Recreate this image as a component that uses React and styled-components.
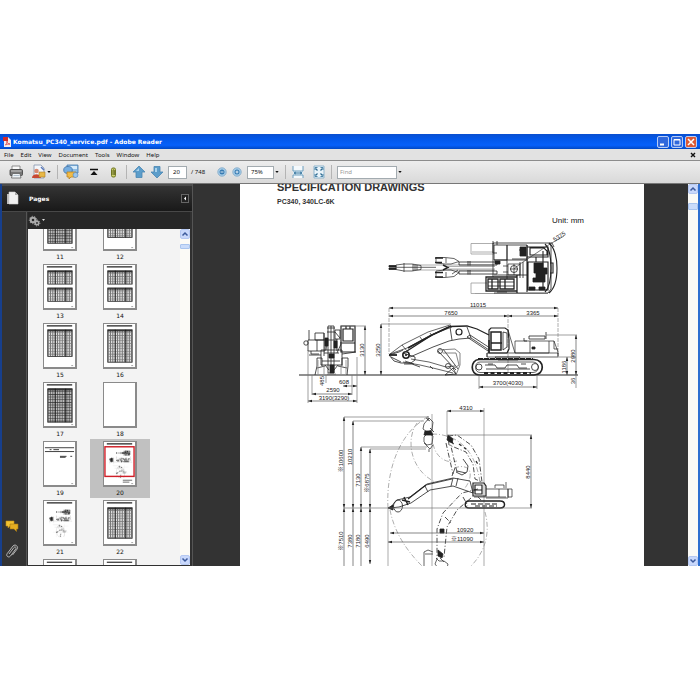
import React, { useState } from 'react';
import styled, { createGlobalStyle } from 'styled-components';

const GlobalStyle = createGlobalStyle`
  * {
    box-sizing: border-box;
  }

  body {
    margin: 0;
    background: #fff;
    font-family: 'Noto Sans', 'Liberation Sans', sans-serif;
    font-size: 6px;
    color: #111;
  }

  button, input, select {
    font: inherit;
    color: inherit;
    margin: 0;
  }
`;

const Window = styled.div`
  display: flex;
  flex-direction: column;
  height: calc(100vh - 268px);
  margin: 134px 0;
  overflow: hidden;
`;

const TitleBar = styled.header`
  display: flex;
  align-items: center;
  height: 15px;
  flex: none;
  padding: 0 3px;
  gap: 2px;
  background: linear-gradient(#0a4fd0, #0257e8 30%, #0660fa 75%, #0148c4);
`;

const Title = styled.h1`
  flex: 1;
  margin: 0;
  font: bold 6px/14px 'DejaVu Sans', sans-serif;
  color: #fff;
`;

const CaptionButton = styled.button`
  width: 12px;
  height: 12px;
  padding: 0;
  display: flex;
  border: 1px solid #b9cdf5;
  border-radius: 2px;
  background: ${(props) => (props.$close ? '#dc5a35' : '#3068dc')};
`;

const MenuBar = styled.nav`
  display: flex;
  align-items: center;
  gap: 7px;
  height: 12px;
  flex: none;
  padding: 0 4px;
  background: #e2e2e2;
  border-bottom: 1px solid #8c8c8c;
`;

const MenuItem = styled.button`
  padding: 0;
  border: 0;
  background: none;
  line-height: 10px;

  &:last-child {
    display: flex;
    margin-left: auto;
  }
`;

const Toolbar = styled.div`
  display: flex;
  align-items: center;
  height: 23px;
  flex: none;
  padding-left: 8px;
  background: linear-gradient(#ededed, #d9d9d9);
  border-bottom: 1px solid #777;
`;

const ToolGroup = styled.div`
  display: flex;
  align-items: center;
  gap: ${(props) => props.$gap}px;
`;

const ToolButton = styled.button`
  display: flex;
  align-items: center;
  padding: 0;
  border: 0;
  background: none;
`;

const Divider = styled.span`
  width: 1px;
  height: 14px;
  margin: 0 5px;
  background: #b4b4b4;
`;

const field = `
  height: 13px;
  border: 1px solid #a3abb0;
  border-radius: 0;
  background: #fff;
  outline: none;
`;

const PageInput = styled.input`
  ${field}
  width: 19px;
  padding: 0 4px;
`;

const PageTotal = styled.span`
  width: 26px;
`;

const ZoomSelect = styled.select`
  ${field}
  appearance: none;
  width: 27px;
  padding: 0 3px;
`;

const FindInput = styled.input`
  ${field}
  width: 60px;
  padding: 0 2px;

  &::placeholder {
    color: #999;
    opacity: 1;
  }
`;

const Workspace = styled.main`
  display: flex;
  flex: 1;
  min-height: 0;
  border: solid #173f8c;
  border-width: 0 0 0 2px;
  background: #333;
`;

const Sidebar = styled.aside`
  display: flex;
  flex-direction: column;
  width: 191px;
  flex: none;
  border-right: 1px solid #555;
  background: #303030;
`;

const PanelHeader = styled.div`
  display: flex;
  align-items: center;
  gap: 10px;
  height: 28px;
  flex: none;
  padding: 0 3px 0 4px;
  border-top: 2px solid #4b4b4b;
  border-bottom: 1px solid #484848;
  background: linear-gradient(#343434, #191919);
`;

const PanelTitle = styled.h2`
  flex: 1;
  margin: 0;
  font: bold 6px/10px 'DejaVu Sans', sans-serif;
  color: #fff;
`;

const CollapseButton = styled.button`
  display: flex;
  width: 8px;
  height: 9px;
  padding: 0;
  border: 1px solid #666;
  background: #222;
`;

const SidebarBody = styled.div`
  display: flex;
  flex: 1;
  min-height: 0;
`;

const Rail = styled.div`
  display: flex;
  flex-direction: column;
  justify-content: flex-end;
  align-items: center;
  gap: 12px;
  width: 24px;
  padding: 0 4px 6px 0;
  background: #333;
`;

const PagesPanel = styled.section`
  display: flex;
  flex-direction: column;
  flex: 1;
  border-left: 1px solid #555;
  padding: 0 2px 1px 1px;
`;

const PanelOptions = styled.div`
  display: flex;
  align-items: center;
  height: 17px;
  flex: none;
  background: #272727;
`;

const ThumbArea = styled.div`
  display: flex;
  flex: 1;
  min-height: 0;
  overflow: hidden;
  background: #f3f3f3;
`;

const ThumbGrid = styled.div`
  display: grid;
  grid-template-columns: 60px 60px;
  grid-auto-rows: 59px;
  flex: 1;
  margin-top: -26px;
  padding-left: 2px;
`;

const ThumbCell = styled.button`
  display: flex;
  flex-direction: column;
  align-items: center;
  padding: 2px 0 0;
  border: 0;
  background: ${(props) => (props.$active ? '#c1c1c1' : 'none')};
  font: 6px/11px 'DejaVu Sans', sans-serif;
`;

const ThumbSheet = styled.svg`
  display: block;
  width: 34px;
  height: 46px;
  border: solid #8a8a8a;
  border-width: 1px 2px 2px 1px;
  background: #fff;
`;

const ScrollTrack = styled.div`
  display: flex;
  flex-direction: column;
  width: 10px;
  flex: none;
  background: #fbfaf6;
`;

const ScrollButton = styled.button`
  display: flex;
  height: 10px;
  padding: 0;
  border: 1px solid #b5c8f2;
  border-radius: 2px;
  background: #c9d8fb;

  &:last-child {
    margin-top: auto;
  }
`;

const ScrollHandle = styled.div`
  height: ${(props) => props.$size}px;
  margin-top: ${(props) => props.$offset}px;
  border: 1px solid #a9c4ee;
  border-radius: 1px;
  background: #c9dbfa;
`;

const DocumentView = styled.section`
  display: flex;
  flex: 1;
  min-width: 0;
  padding-left: 47px;
`;

const Sheet = styled.article`
  flex: 1;
  min-width: 0;
  margin-right: 44px;
  overflow: hidden;
  background: #fff;
  font-family: 'Liberation Sans', sans-serif;
  color: #333;
`;

const SheetHeading = styled.h2`
  margin: -4px 0 0 37px;
  font-size: 11px;
  line-height: 14px;
  white-space: nowrap;
`;

const ModelName = styled.p`
  margin: 3px 0 0 37px;
  font-size: 7px;
  font-weight: bold;
  line-height: 10px;
`;

const UnitNote = styled.p`
  margin: 9px 60px 0 0;
  font-size: 8px;
  line-height: 10px;
  text-align: right;
  color: #111;
`;

const Drawing = styled.svg`
  display: block;
  margin: 2px 0 0 50px;
`;

const WindowEdge = styled.div`
  width: 2px;
  background: #2e6fd0;
`;

function Caret() {
  return (
    <svg width="6" height="6" viewBox="0 0 6 6">
      <path d="M1.3 2h3.4L3 4z" fill="#111" />
    </svg>
  );
}

function Chevron({ down }) {
  return (
    <svg width="8" height="8" viewBox="0 0 8 8">
      <path
        d={down ? 'M1.500 2.500 4 5l2.500-2.500' : 'M1.500 5.500 4 3l2.500 2.500'}
        fill="none"
        stroke="#3c5a9c"
        strokeWidth="1.500"
      />
    </svg>
  );
}

function PdfIcon() {
  return (
    <svg width="8" height="10" viewBox="0 0 8 10">
      <path d="M1 0h4l3 3v7H1z" fill="#f4eeee" />
      <path d="M0 0h5v4H0z" fill="#d12a2a" />
      <path d="M2.500 8C4 6 4 5 4 4c0 2 1 3 3 3-2 0-3 .3-4.500 1" fill="none" stroke="#d12a2a" strokeWidth=".7" />
    </svg>
  );
}

function PrintIcon() {
  return (
    <svg width="16" height="16" viewBox="0 0 16 16">
      <path d="M4 2h8v4H4z" fill="#fafafa" stroke="#777" strokeWidth=".8" />
      <rect x="2" y="5.500" width="12.500" height="6" rx="1" fill="#777" stroke="#3c3c3c" strokeWidth=".8" />
      <path d="M3 7h10.500" stroke="#ccc" />
      <path d="M4.500 9.500h7.500l1 4.500H3.500z" fill="#eef3f6" stroke="#555" strokeWidth=".7" />
      <path d="M5.500 11.500h6" stroke="#9ab" strokeWidth=".7" />
    </svg>
  );
}

function ShareIcon() {
  return (
    <svg width="15" height="16" viewBox="0 0 15 16">
      <path d="M3 1h7l3 3v10H3z" fill="#f4f6fa" stroke="#8795ac" strokeWidth=".8" />
      <circle cx="5.500" cy="7" r="2.300" fill="#d8876d" />
      <path d="M1 14c0-5 9-5 9 0z" fill="#c94832" />
      <path d="M8 8h6v5H8z" fill="#e9b845" stroke="#a77d2a" strokeWidth=".6" />
      <path d="m10 3 3 3" stroke="#5978ba" strokeWidth="1.500" />
    </svg>
  );
}

function MeetingIcon() {
  return (
    <svg width="16" height="16" viewBox="0 0 16 16">
      <path d="M4 1h11v8H4z" fill="#8dbbe3" stroke="#4478ad" strokeWidth=".8" />
      <path d="M5 2h9v3H5z" fill="#d5eafa" />
      <ellipse cx="5" cy="6" rx="4.300" ry="3.500" fill="#77aee0" stroke="#3f72a8" strokeWidth=".8" />
      <path d="M4 8h9v5H8l-2 2v-2H4z" fill="#f1bb47" stroke="#b98323" strokeWidth=".8" />
      <circle cx="12.500" cy="11" r="2.500" fill="#9cc5eb" stroke="#4f83b8" strokeWidth=".6" />
    </svg>
  );
}

function TopIcon() {
  return (
    <svg width="12" height="12" viewBox="0 0 12 12">
      <path d="M2 3.500h8" stroke="#111" strokeWidth="1.500" />
      <path d="M6 5 9.500 9h-7z" fill="#111" />
    </svg>
  );
}

function ClipIcon() {
  return (
    <svg width="12" height="13" viewBox="0 0 12 13">
      <rect x="2.500" y="2" width="4" height="9" rx="1.500" fill="#ced36c" stroke="#6f7521" />
      <path d="M4 9V4.500c0-1 1.300-1 1.300 0V9" fill="none" stroke="#42460f" strokeWidth=".8" />
    </svg>
  );
}

function ArrowIcon({ down }) {
  return (
    <svg width="14" height="14" viewBox="0 0 14 14">
      <path
        d={down ? 'M7 13 1 7h3V1.500h6V7h3z' : 'M7 1 13 7h-3v5.500H4V7H1z'}
        fill="#5c9dca"
        stroke="#4a86b2"
        strokeWidth=".8"
      />
      <path d={down ? 'M5 3v4h2V3z' : 'M7 3 4 6h3z'} fill="#a9d2ec" />
    </svg>
  );
}

function ZoomIcon({ plus }) {
  return (
    <svg width="10" height="10" viewBox="0 0 10 10">
      <circle cx="5" cy="5" r="4.200" fill="#a9cfea" stroke="#7ba5c5" strokeWidth=".8" />
      <circle cx="5" cy="5" r="2.500" fill="#377bb2" />
      <path d={plus ? 'M3.500 5h3M5 3.500v3' : 'M3.500 5h3'} stroke="#fff" strokeWidth=".8" />
    </svg>
  );
}

function FitWidthIcon() {
  return (
    <svg width="14" height="14" viewBox="0 0 14 14">
      <path d="M2 1h10v12H2z" fill="#dcebf4" />
      <path d="M2 1v5h10V1M2 13v-3h10v3" fill="#f4f9fc" stroke="#6d9ebd" />
      <path d="M3 8h8M5 7 3 8l2 1M9 7l2 1-2 1" fill="none" stroke="#3f7ca3" />
    </svg>
  );
}

function FitPageIcon() {
  return (
    <svg width="14" height="14" viewBox="0 0 14 14">
      <path d="M2 1h10v12H2z" fill="#e9f3f9" stroke="#8fb5cd" />
      <path d="m3.500 3.500 2 2M10.500 3.500l-2 2M3.500 10.500l2-2M10.500 10.500l-2-2" stroke="#2f6b91" strokeWidth="1.200" />
      <path d="M3 5V2.500h2.500M8.500 2.500H11V5M3 9v2.500h2.500M8.500 11.500H11V9" fill="none" stroke="#4f86a9" />
    </svg>
  );
}

function PagesIcon() {
  return (
    <svg width="13" height="15" viewBox="0 0 13 15">
      <path d="M1 3h7v10H1z" fill="#bbb" />
      <path d="M3 1h6l3 3v9H3z" fill="#f1f1f1" stroke="#ccc" strokeWidth=".6" />
      <path d="M9 1v3h3z" fill="#aaa" />
    </svg>
  );
}

function GearsIcon() {
  return (
    <svg width="18" height="12" viewBox="0 0 18 12">
      <g fill="none" stroke="#aaa">
        <circle cx="5" cy="5" r="2.300" strokeWidth="2" />
        <circle cx="5" cy="5" r="3.700" strokeDasharray="1.300 1.300" />
        <circle cx="9" cy="8" r="1.700" strokeWidth="1.600" />
        <circle cx="9" cy="8" r="2.900" strokeDasharray="1.100 1.100" />
      </g>
      <path d="M14 4h3l-1.500 2z" fill="#ddd" />
    </svg>
  );
}

function CommentsIcon() {
  return (
    <svg width="14" height="12" viewBox="0 0 14 12">
      <path d="M1 1h8v5H5L3 8V6H1z" fill="#f2c230" stroke="#c38d14" strokeWidth=".6" />
      <path d="M5 4h8v5h-1.500v2.500L9 9H5z" fill="#e4ad22" stroke="#a97812" strokeWidth=".6" />
    </svg>
  );
}

function PaperclipIcon() {
  return (
    <svg width="14" height="16" viewBox="0 0 14 16">
      <path
        d="m4 10 5-6.500c1-1.300 2.800 0 1.800 1.400L5.500 12c-1.800 2.300-5 0-3.300-2.400L8 2c2-2.500 6 .5 4 3.200L7.500 11"
        fill="none"
        stroke="#c4c4c4"
        strokeWidth=".9"
      />
    </svg>
  );
}

const INK = '#222';

// Dimension line with a filled head at both ends
function Dim({ x1, y1, x2, y2 }) {
  const vertical = x1 === x2;
  const heads = vertical
    ? `M${x1} ${y1}l-1.200 4h2.400zM${x2} ${y2}l-1.200-4h2.400z`
    : `M${x1} ${y1}l4-1.200v2.400zM${x2} ${y2}l-4-1.200v2.400z`;
  return (
    <g>
      <path d={`M${x1} ${y1}L${x2} ${y2}`} stroke="#555" strokeWidth=".7" />
      <path d={heads} fill={INK} stroke="none" />
    </g>
  );
}

function TopView() {
  return (
    <g>
      <g stroke="#999">
        <path d="M494 243.500H471v10.500h23M471 283v10.500h24M471 283h16M494 252h-22M475 293.500h73" />
        <path d="M413 265h82M413 270h82M448 266.500h47M448 269h47" />
      </g>
      <path d="M389 265.500h7v1.500h-7zM389 268h7v1.500h-7z" fill={INK} />
      <path d="M396 265l8-1h8l9 1.500v4l-9 1.500h-8l-8-1.500zM396 267.300h40M404 263v9M413 264v7M415 265v5M417 265v5" strokeWidth=".7" />
      <path d="M436 257.500h9l9 1 5 3-8 2.500h-6l-9-1zM436 277.500h9l9-1 5-4-8-2.500h-6l-9 1zM446 258v5M446 272v5M452 274l6-4" strokeWidth=".7" />
      <path d="M435 258h8M435 262.500h7M435 272.500h8M435 277h8M443 265l5 2.500-5 2.500" strokeWidth="1.400" />
      <path d="M459 262h38v3h-38zM459 271h38v3h-38zM468 261v4.500M470 261v4.500M468 270v4.500M470 270v4.500" />
      <path d="M493 243h56l2 3v43l-3 4h-54M494 245h13v15h-13zM507 245h20v14h-15M507 245v34M493 243v34" />
      <path d="M497 241v4M497 253h-4v-12M494 260h34M494 275h34M519 250h7M520 262v16M523 262v16" />
      <path d="M520 247h6v9h-6z" fill={INK} />
      <path d="M527 245v47M527 257h21v-10h-21M528 262h20v28h-20zM530 248h14l3 3v4h-17zM536 257v5M543 251v38" strokeWidth="1.100" />
      <path d="M534 263h9v5h4v6h-2v8h-12v-4h3v-5h-2z" fill={INK} />
      <path d="M549 243c4 3 8 12 8 25s-3 21-8 25M545 244c4 4 6 12 6 24s-2 20-6 24M550 263h3v10h-3" strokeWidth="1.100" />
      <path d="M549 243h3l2 4" />
      <path d="M486 277h31v14h-31zM488 279h10v10h-10zM500 279h14v10h-14zM492 279v10M505 279v10M517 275v18" strokeWidth="1.300" />
      <path d="M488 282h26M488 286h26" strokeWidth=".8" />
      <path d="M508 264h12v11h-12zM510 269h8M514 264v11M503 266h5M503 272h5" strokeWidth=".7" />
      <circle cx="514" cy="269" r="3.500" />
      <path d="M495 261h5v3h-5zM529 287h6v3h-6zM539 287h6v3h-6zM497 292l10 0" fill={INK} />
      <path d="M564 236l-14 8-30 20-6 5" strokeWidth=".6" />
    </g>
  );
}

function Crawler() {
  return (
    <g>
      <path d="M479 359.500h55c11 0 11 15.500 0 15.500h-55c-9 0-9-15.500 0-15.500z" strokeWidth="1.700" />
      <path d="M480 362h53c7 0 7 10.500 0 10.500h-53c-6 0-6-10.500 0-10.500z" strokeWidth=".7" />
      <circle cx="479" cy="367" r="3" />
      <circle cx="535" cy="367" r="3.500" />
      <path d="M484 373h47" strokeWidth="2" strokeDasharray="4 2.500" />
      <path d="M485 365h10l2 3h8l2-3h10l2 3h8M488 364h5M521 364h5M486 369h44" />
      <path d="M478 359h55" strokeWidth="2" strokeDasharray="5 1" />
    </g>
  );
}

function SideView() {
  return (
    <g>
      <path d="M389 308v46M508 314v61M558 308v46" stroke="#999" strokeDasharray="4 1" />
      <Crawler />
      <path d="M489 353V330l2-2h14l3 2 1 10v9l-2 4z" strokeWidth="1.200" />
      <path d="M491 332h10v18h-10zM491 343h11M489 340v13" strokeWidth="1.500" />
      <path d="M503 332l4 1v14l-4 3z" />
      <path d="M487 353h71v4h-71zM495 357h25l-2 3h-20zM515 341h34v12h-34zM530 341v12M549 341h5l4 11v4M554 341v8h4M515 353l-4-13-3-10M487 357v-4" strokeWidth=".7" />
      <path d="M529 339v-3h16v3zM546 339v-7M527 341h-3v-3" />
      <path d="M532 347h3v2h-3z" fill={INK} />
      <path d="M489 335l-12-6-10-3-17 .5-18 8.500-25 16" strokeWidth="1.300" />
      <path d="M489 350l-18-12-12 1-10 2-16 6-23 10M450 327l2 13M467 327l4 11" />
      <circle cx="459" cy="332" r="3" strokeWidth="1.200" />
      <path d="M467 337l3-2 20 13-2 3z" />
      <path d="M390 354l12-9 26-13 22-7 2 2-21 8-24 13zM420 337l3 4M430 333l2 3M402 345l5 6" strokeWidth=".7" />
      <path d="M408 348l24-13 17-8" strokeWidth="1.500" />
      <circle cx="406" cy="355" r="3.200" strokeWidth="1.600" />
      <circle cx="406" cy="355" r=".8" fill={INK} />
      <path d="M389 355l5 6 7 2h10l4-3 0-3-12-4M389 355l10-3 4-2M391 357l10 5" />
      <path d="M389 355l8 0" strokeWidth="1.800" />
      <path d="M411 359l18 3 17 5 9-1M403 362l17 3 13 3 20 5M405 361l9 3" strokeWidth=".7" />
      <path d="M404 364h8l8 3M430 366l3 3M438 351l18 19M443 349l15 20" />
      <circle cx="440" cy="351" r="2.500" />
      <circle cx="448" cy="366" r="2.500" />
      <path d="M438 350l17-1 5 4v12l-4 10M443 353h13M456 353l3 12-6 4M448 366l8 8" stroke="#666" />
      <path d="M445 375l8-7 3 6z" />
    </g>
  );
}

function FrontView() {
  return (
    <g>
      <path d="M328 326h6v47h-6zM331 326v47M327 328h8M327 332h8M325 340h12" />
      <path d="M341 326h14v26h-14zM343 329h10v12h-10zM340 343h15M346 326v3M350 326v3" strokeWidth="1.200" />
      <path d="M308 340h17v11h-17zM315 333h9v7h-9zM309 330v10M317 340v11M311 351v3h8M335 330h5v9h-5zM335 332l5 6M324 333v23M337 339v12" />
      <circle cx="306" cy="343" r="2.200" />
      <path d="M321 350h21v15h-21zM324 353h15M322 361h18M326 350l1-10M337 353l4-9M342 354l14-2M309 355h12" />
      <path d="M329 354h5v4h-5zM330 365h4v8h-4zM325 338h3v8h-3zM334 341h3v7h-3z" fill={INK} />
      <path d="M317 366v-8h5v8M317 366l-2 9M342 366v-8h6v8M348 366l-1 9M325 365l4 5M334 370l4-5M317 368l8-2M347 368l-9-2" />
      <path d="M318 374v-14M346 374v-14M324 374v-9M341 374v-9M327 374h9" stroke="#888" />
    </g>
  );
}

function WorkingRange() {
  return (
    <g>
      <path d="M388 508v58M432 414v152M484 408v158M447 411v26" stroke="#888" strokeWidth=".7" />
      <g stroke="#999" strokeDasharray="5 2 1 2">
        <path d="M388 508c-2-34 9-68 31-85l8-6M390 510c4 20 14 38 32 56M485 512c5 18 2 38-14 54" />
        <path d="M417 423c-11 15-8 46 18 59M433 444c3 14 14 20 24 17M432 434c25 0 43 15 48 48M454 468c18-6 20 8 11 20" />
      </g>
      <path d="M424 424l5-6 4 4-1 8-5 2-4-3zM424 437l4-4 5 3-1 8-5 1-3-3zM424 443l6 6 3-4M426 418l4 3M429 449v3M428 416v5" strokeWidth=".7" />
      <path d="M425 431h6l2 4h-9zM430 428l4 4" fill={INK} />
      <g strokeDasharray="5 2 1 2" strokeWidth=".8">
        <path d="M448 436l9-1 14 10 8 14 3 23-7-3-2-15-7-12-17-7zM449 438l8 34M446 443l7 31" />
        <path d="M478 489l-16 4-19 20-6 16v30M471 498l-14 12-10 17-3 30M445 517l7 7M463 497l5 9" />
      </g>
      <path d="M448 437l7 9M459 444l10 7M476 461l3 5" strokeWidth="1.200" strokeDasharray="3 3" />
      <path d="M463 459l5 7-1 6-5 3-6-3M455 468l-3 8M457 471l9 2" strokeWidth=".8" />
      <path d="M448 435l5 4-1 4-5-3zM440 529h4v4h-4zM438 550l5 4-1 4-4-2z" fill={INK} />
      <path d="M390 508l7-8 13-3 17-13 26-6 17 3 3 12-20-7-23 4-19 13-12 4-9 1z" strokeWidth=".8" />
      <path d="M408 499l18-14" strokeWidth="1.100" />
      <path d="M426 485l26-6M425 486l3 6M453 478l-2 8M458 478l-2 8" />
      <path d="M402 500l8 2M404 497l4 8" strokeWidth="1.400" />
      <ellipse cx="398" cy="506" rx="4.500" ry="6" />
      <path d="M388 508l5-3v5z" fill={INK} />
      <path d="M473 483h11l2 3v10h-13zM475 485h7v9h-7zM474 490h8" strokeWidth="1.200" />
      <path d="M486 489h22v9h-22M499 489v8M508 489h4v8h-4zM495 488v-3h9v3M506 488v-6M474 497h32M478 497l3 3" strokeWidth=".7" />
      <path d="M469 501h31c6 0 6 7 0 7h-31c-5 0-5-7 0-7z" strokeWidth="1.500" />
      <path d="M471 504h28M475 506h22" strokeDasharray="5 2" strokeWidth="1.200" />
      <path d="M424 566v-14l4-2 5 2M425 554h8M436 558l3 3h5l4 3-1 4M437 559l-2 5 3 4M440 558l4 4" strokeWidth=".7" />
    </g>
  );
}

function MachineLines({ weight = '.8' }) {
  return (
    <g fill="none" stroke={INK} strokeWidth={weight}>
      <TopView />
      <SideView />
      <FrontView />
      <WorkingRange />
      <path d="M299 375h279" strokeWidth="1.200" />
      <path
        d="M381 324h70M546 335h31M558 357h18M341 326h25M344 417h84M353 421h71M361 447h66M370 449h56M344 508h188M447 435h85M479 375v14M537 375v14M357 357v46M308 350v53M312 375v20M352 375v20M326 375v8M576 375v13"
        stroke="#777"
        strokeWidth=".7"
      />
    </g>
  );
}

const dims = [
  [389, 308, 558, 308], [389, 316, 508, 316], [508, 316, 558, 316], [381, 324, 381, 375],
  [576, 335, 576, 375], [567, 357, 567, 375], [365, 326, 365, 375], [479, 387, 537, 387],
  [343, 386, 357, 386], [312, 394, 352, 394], [308, 401, 357, 401], [447, 411, 484, 411],
  [531, 435, 531, 508], [344, 417, 344, 508], [353, 421, 353, 508], [361, 447, 361, 508],
  [370, 449, 370, 508], [344, 508, 344, 580], [353, 508, 353, 580], [361, 508, 361, 580],
  [370, 508, 370, 564], [390, 533, 484, 533], [388, 542, 484, 542],
];

const labels = [
  { text: '11015', x: 478, y: 308 },
  { text: '7650', x: 451, y: 316 },
  { text: '3365', x: 533, y: 316 },
  { text: '3250', x: 381, y: 350, turn: -90 },
  { text: '2980', x: 576, y: 356, turn: -90 },
  { text: '1186', x: 567, y: 367, turn: -90 },
  { text: '36', x: 576, y: 381, turn: -90 },
  { text: '3700(4030)', x: 508, y: 386 },
  { text: '3130', x: 365, y: 350, turn: -90 },
  { text: '485', x: 325, y: 381, turn: -90 },
  { text: '608', x: 344, y: 385 },
  { text: '2590', x: 333, y: 393 },
  { text: '3190(3290)', x: 334, y: 401 },
  { text: '5375', x: 561, y: 239, turn: -33 },
  { text: '4310', x: 466, y: 411 },
  { text: '8440', x: 531, y: 472, turn: -90 },
  { text: '※10600', x: 344, y: 461, turn: -90 },
  { text: '10210', x: 353, y: 457, turn: -90 },
  { text: '7130', x: 361, y: 480, turn: -90 },
  { text: '※6875', x: 370, y: 483, turn: -90 },
  { text: '※7510', x: 344, y: 541, turn: -90 },
  { text: '7380', x: 353, y: 541, turn: -90 },
  { text: '7180', x: 361, y: 541, turn: -90 },
  { text: '6490', x: 370, y: 541, turn: -90 },
  { text: '10920', x: 465, y: 533 },
  { text: '※11090', x: 462, y: 542 },
];

function SpecDrawing() {
  return (
    <Drawing width="300" height="340" viewBox="290 228 300 340" role="img" aria-label="PC340 dimensions">
      <MachineLines />
      {dims.map(([x1, y1, x2, y2]) => (
        <Dim key={`${x1}-${y1}-${x2}-${y2}`} x1={x1} y1={y1} x2={x2} y2={y2} />
      ))}
      <g fontFamily="'Liberation Sans', 'Noto Sans CJK JP', sans-serif" fontSize="6" fill="#222" textAnchor="middle">
        {labels.map(({ text, x, y, turn = 0 }) => (
          <text key={text} transform={`translate(${x} ${y}) rotate(${turn})`} y="-1">
            {text}
          </text>
        ))}
      </g>
    </Drawing>
  );
}

// Miniature table of figures, drawn as ruled columns over small text rows
function MiniTable({ y, height, dark }) {
  return (
    <g fill="none">
      <rect x="4" y={y} width="26" height={height} fill={dark ? '#bbb' : '#ddd'} stroke="#222" strokeWidth=".8" />
      <path
        d={`M4 ${y + height / 2}h26`}
        stroke="#555"
        strokeWidth={height}
        strokeDasharray=".8 1.700"
      />
      <path
        d={`M17 ${y}v${height}`}
        stroke={dark ? '#333' : '#777'}
        strokeWidth="25"
        strokeDasharray=".6 2.200"
      />
      <path d={`M4 ${y + 1}h26`} stroke="#333" strokeWidth="1.500" />
      <path d={`M12 ${y}v${height}M23 ${y}v${height}`} stroke="#111" strokeWidth=".8" />
    </g>
  );
}

const pages = [
  { number: 11, tables: [[3, 36]], dark: true },
  { number: 12, tables: [[3, 30]] },
  { number: 13, tables: [[6, 14], [24, 14]] },
  { number: 14, tables: [[6, 14], [24, 14]] },
  { number: 15, tables: [[6, 28]] },
  { number: 16, tables: [[6, 34]] },
  { number: 17, tables: [[6, 35]], dark: true },
  { number: 18, blank: true },
  { number: 19, cover: true },
  { number: 20, drawing: true },
  { number: 21, drawing: true },
  { number: 22, tables: [[7, 32]] },
];

function Thumbnail({ page, active, onSelect }) {
  return (
    <ThumbCell $active={active} onClick={() => onSelect(page.number)}>
      <ThumbSheet viewBox="0 0 33 45" preserveAspectRatio="none">
        {!page.blank && !page.cover && <path d="M3 2h4M7 2h18M25 2h5" stroke="#222" strokeWidth="1.200" />}
        {page.tables?.map(([y, height]) => (
          <MiniTable key={y} y={y} height={height} dark={page.dark} />
        ))}
        {page.cover && (
          <path d="M1 6h31M1 10h31M6 8h2M10 8h6M17 15h7M28 15h2M17 16h6" stroke="#222" strokeWidth=".9" />
        )}
        {page.drawing && (
          <g transform="translate(-21 -12) scale(.088)">
            <MachineLines weight="4" />
          </g>
        )}
        {page.number === 20 && <path d="M20 40h10M20 42h7" stroke="#444" strokeWidth=".8" />}
        {active && <rect x="1" y="5" width="31" height="31" fill="none" stroke="#cf1f28" strokeWidth="1.500" />}
        {!page.blank && <path d="M29 43.500h2" stroke="#666" strokeWidth=".6" />}
      </ThumbSheet>
      {page.number}
    </ThumbCell>
  );
}

// Top edge of a sheet that is still below the fold
function SheetEdge() {
  return (
    <ThumbCell as="div">
      <ThumbSheet viewBox="0 0 33 45">
        <path d="M3 2h27" stroke="#222" strokeWidth="1.200" />
      </ThumbSheet>
    </ThumbCell>
  );
}

function Scrollbar({ size, offset }) {
  return (
    <ScrollTrack>
      <ScrollButton aria-label="Scroll up"><Chevron /></ScrollButton>
      <ScrollHandle $size={size} $offset={offset} />
      <ScrollButton aria-label="Scroll down"><Chevron down /></ScrollButton>
    </ScrollTrack>
  );
}

const menus = ['File', 'Edit', 'View', 'Document', 'Tools', 'Window', 'Help'];

function App() {
  const [current, setCurrent] = useState(20);
  const [zoom, setZoom] = useState('75%');
  const [query, setQuery] = useState('');

  return (
    <>
      <GlobalStyle />
      <Window>
        <TitleBar>
          <PdfIcon />
          <Title>Komatsu_PC340_service.pdf - Adobe Reader</Title>
          <CaptionButton aria-label="Minimize">
            <svg width="10" height="10" viewBox="0 0 10 10"><path d="M2 7.500h4" stroke="#fff" strokeWidth="2" /></svg>
          </CaptionButton>
          <CaptionButton aria-label="Maximize">
            <svg width="10" height="10" viewBox="0 0 10 10"><path d="M2 2.500h6V8H2zM2 3h6" fill="none" stroke="#fff" /></svg>
          </CaptionButton>
          <CaptionButton $close aria-label="Close">
            <svg width="10" height="10" viewBox="0 0 10 10"><path d="m2 2 6 6M8 2 2 8" stroke="#fff" strokeWidth="1.500" /></svg>
          </CaptionButton>
        </TitleBar>

        <MenuBar>
          {menus.map((menu) => (
            <MenuItem key={menu}>{menu}</MenuItem>
          ))}
          <MenuItem aria-label="Close document">
            <svg width="6" height="6" viewBox="0 0 6 6"><path d="m1 1 4 4M5 1 1 5" stroke="#111" strokeWidth="1.400" /></svg>
          </MenuItem>
        </MenuBar>

        <Toolbar>
          <ToolGroup $gap={7}>
            <ToolButton aria-label="Print"><PrintIcon /></ToolButton>
            <ToolButton aria-label="Collaborate">
              <ShareIcon />
              <Caret />
            </ToolButton>
          </ToolGroup>
          <Divider />
          <ToolGroup $gap={9}>
            <ToolButton aria-label="Start meeting"><MeetingIcon /></ToolButton>
            <ToolButton aria-label="First page"><TopIcon /></ToolButton>
            <ToolButton aria-label="Attachments"><ClipIcon /></ToolButton>
          </ToolGroup>
          <Divider />
          <ToolGroup $gap={4}>
            <ToolButton aria-label="Previous page"><ArrowIcon /></ToolButton>
            <ToolButton aria-label="Next page"><ArrowIcon down /></ToolButton>
            <PageInput
              aria-label="Page number"
              value={current}
              onChange={(e) => setCurrent(Number(e.target.value) || 1)}
            />
            <PageTotal>/ 748</PageTotal>
          </ToolGroup>
          <ToolGroup $gap={5}>
            <ToolButton aria-label="Zoom out"><ZoomIcon /></ToolButton>
            <ToolButton aria-label="Zoom in"><ZoomIcon plus /></ToolButton>
            <ToolGroup $gap={0}>
              <ZoomSelect aria-label="Zoom" value={zoom} onChange={(e) => setZoom(e.target.value)}>
                <option>75%</option>
                <option>100%</option>
              </ZoomSelect>
              <Caret />
            </ToolGroup>
          </ToolGroup>
          <Divider />
          <ToolGroup $gap={7}>
            <ToolButton aria-label="Fit width"><FitWidthIcon /></ToolButton>
            <ToolButton aria-label="Fit page"><FitPageIcon /></ToolButton>
          </ToolGroup>
          <Divider />
          <FindInput aria-label="Find" placeholder="Find" value={query} onChange={(e) => setQuery(e.target.value)} />
          <ToolButton aria-label="Find options"><Caret /></ToolButton>
        </Toolbar>

        <Workspace>
          <Sidebar>
            <PanelHeader>
              <PagesIcon />
              <PanelTitle>Pages</PanelTitle>
              <CollapseButton aria-label="Collapse panel">
                <svg width="6" height="7" viewBox="0 0 6 7"><path d="M4 1.500v4l-2-2z" fill="#fff" /></svg>
              </CollapseButton>
            </PanelHeader>
            <SidebarBody>
              <Rail>
                <CommentsIcon />
                <PaperclipIcon />
              </Rail>
              <PagesPanel>
                <PanelOptions>
                  <ToolButton aria-label="Page options"><GearsIcon /></ToolButton>
                </PanelOptions>
                <ThumbArea>
                  <ThumbGrid>
                    {pages.map((page) => (
                      <Thumbnail
                        key={page.number}
                        page={page}
                        active={page.number === current}
                        onSelect={setCurrent}
                      />
                    ))}
                    <SheetEdge />
                    <SheetEdge />
                  </ThumbGrid>
                  <Scrollbar size={5} offset={5} />
                </ThumbArea>
              </PagesPanel>
            </SidebarBody>
          </Sidebar>

          <DocumentView>
            <Sheet>
              <SheetHeading>SPECIFICATION DRAWINGS</SheetHeading>
              <ModelName>PC340, 340LC-6K</ModelName>
              <UnitNote>Unit: mm</UnitNote>
              <SpecDrawing />
            </Sheet>
            <Scrollbar size={7} offset={9} />
            <WindowEdge />
          </DocumentView>
        </Workspace>
      </Window>
    </>
  );
}

export default App;
